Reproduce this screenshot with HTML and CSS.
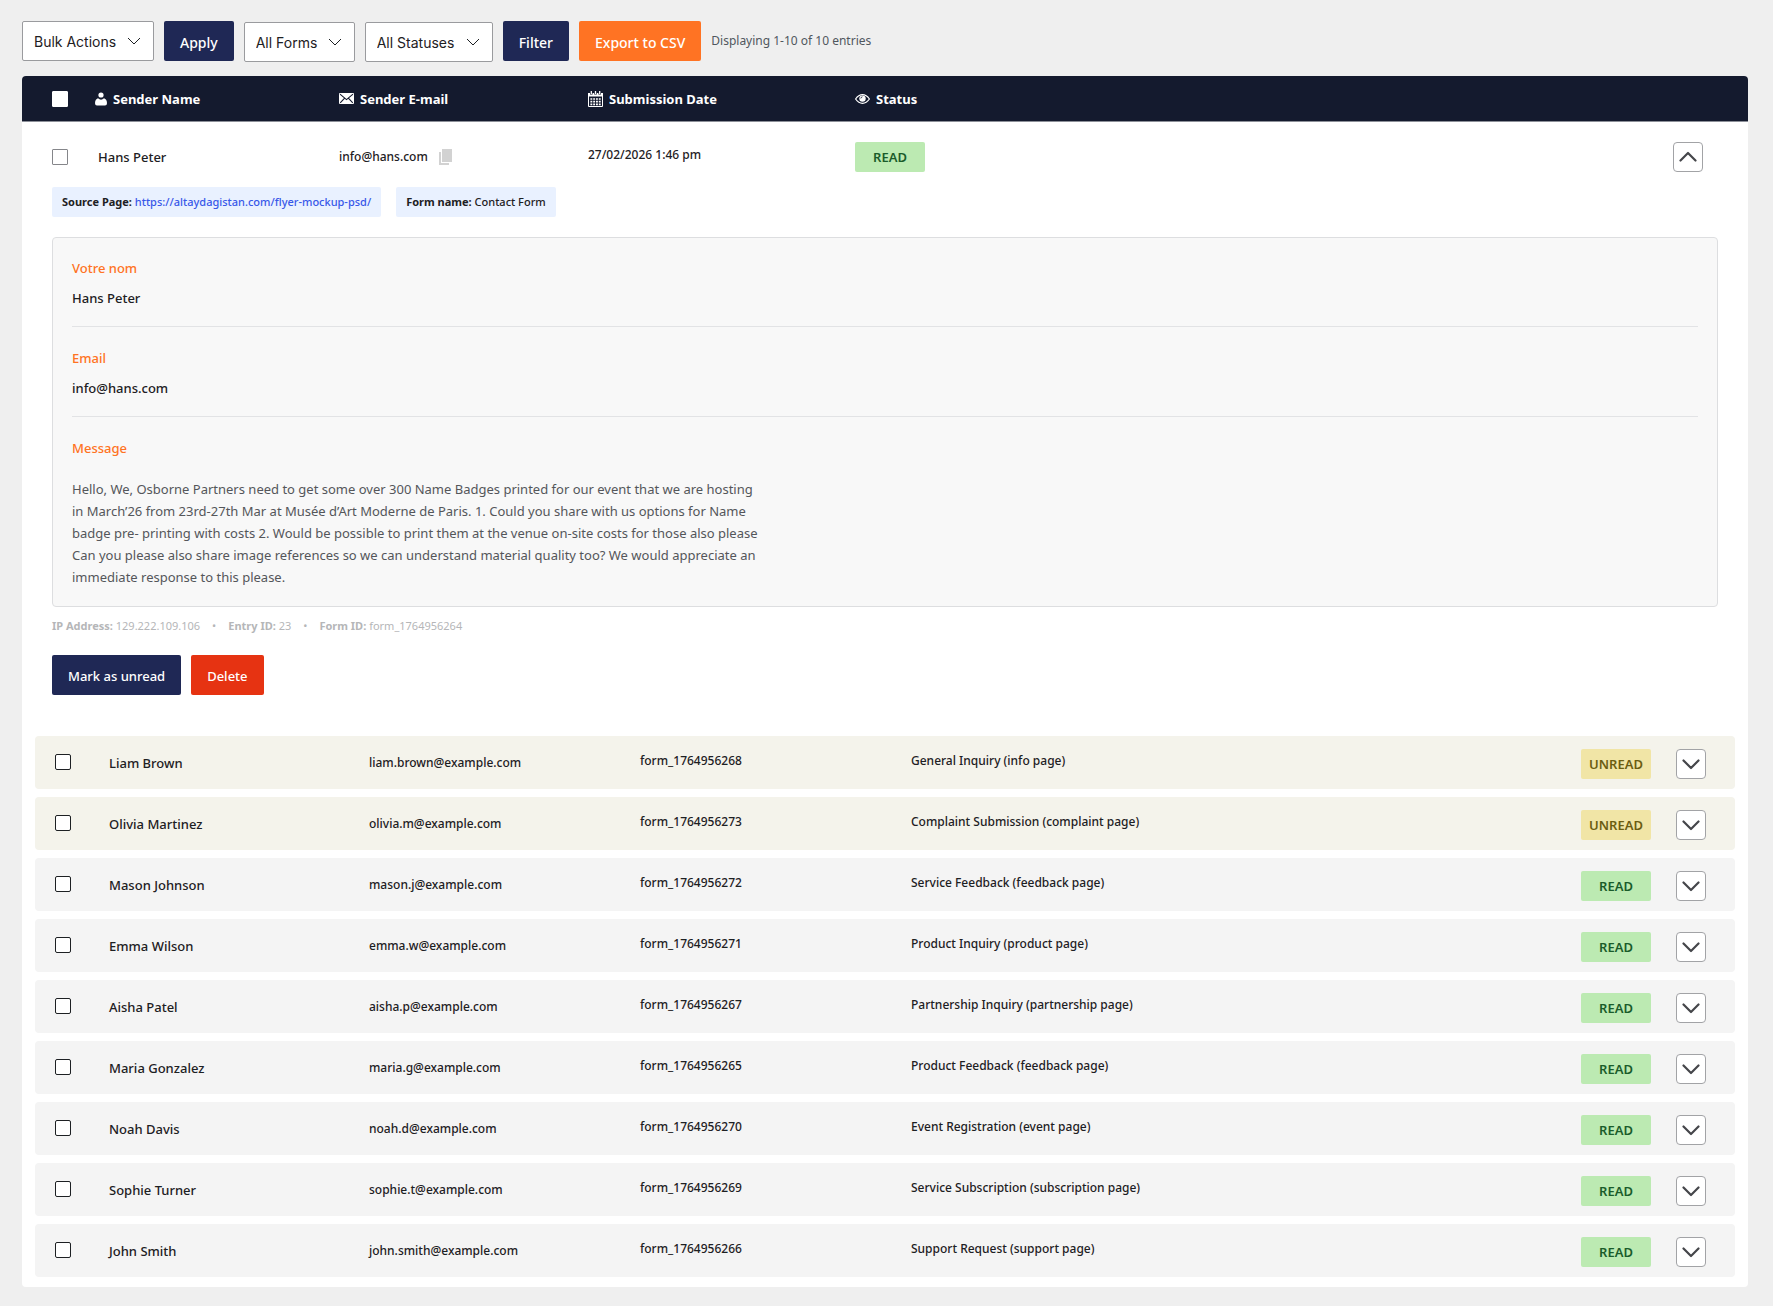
FILE: index.html
```html
<!DOCTYPE html>
<html lang="en">

<head>
    <meta charset="UTF-8">
    <meta name="viewport" content="width=device-width, initial-scale=1.0">
    <title>Form Entries</title>
    <link rel="stylesheet" href="styles.css">
</head>

<body>

    <!-- Shared icons -->
    <svg class="sprite" aria-hidden="true">
        <symbol id="caret" viewBox="0 0 14 8">
            <path d="M1 1 L7 7 L13 1" fill="none" stroke="currentColor" stroke-width="1" />
        </symbol>
        <symbol id="chevron" viewBox="0 0 18 11">
            <path d="M1.5 1.5 L9 9 L16.5 1.5" fill="none" stroke="currentColor" stroke-width="2.2" stroke-linecap="round" stroke-linejoin="round" />
        </symbol>
    </svg>

    <!-- Toolbar -->
    <form class="toolbar">
        <div class="select-box bulk">
            <select aria-label="Bulk Actions">
                <option>Bulk Actions</option>
            </select>
            <svg><use href="#caret" /></svg>
        </div>
        <button type="button" class="btn">Apply</button>
        <div class="select-box forms">
            <select aria-label="Filter by form">
                <option>All Forms</option>
            </select>
            <svg><use href="#caret" /></svg>
        </div>
        <div class="select-box statuses">
            <select aria-label="Filter by status">
                <option>All Statuses</option>
            </select>
            <svg><use href="#caret" /></svg>
        </div>
        <button type="button" class="btn">Filter</button>
        <button type="button" class="btn btn-export">Export to CSV</button>
        <span class="count">Displaying 1-10 of 10 entries</span>
    </form>

    <div class="panel">

        <!-- Header and open entry -->
        <table class="open-table">
            <colgroup>
                <col class="c-check">
                <col class="c-name">
                <col class="c-email">
                <col class="c-date">
                <col>
                <col class="c-toggle">
            </colgroup>
            <thead>
                <tr>
                    <th class="check"><input type="checkbox" aria-label="Select all"></th>
                    <th>
                        <span class="head">
                            <svg width="12" height="14" viewBox="0 0 12 14">
                                <circle cx="6" cy="3" r="2.6" fill="#fff" />
                                <path d="M3 6.3 Q6 9 9 6.3 Q12 7.4 12 11.2 Q12 13.4 10 13.4 H2 Q0 13.4 0 11.2 Q0 7.4 3 6.3Z" fill="#fff" />
                            </svg>
                            Sender Name
                        </span>
                    </th>
                    <th>
                        <span class="head">
                            <svg width="15" height="11" viewBox="0 0 15 11">
                                <rect width="15" height="11" rx="1" fill="#fff" />
                                <path d="M1 1.2 L7.5 6.6 L14 1.2 M1.2 9.8 L5.4 5.4 M13.8 9.8 L9.6 5.4" fill="none" stroke="#141a2e" stroke-width="1.1" />
                            </svg>
                            Sender E-mail
                        </span>
                    </th>
                    <th>
                        <span class="head">
                            <svg width="15" height="16" viewBox="0 0 15 16">
                                <path d="M0.5 5 V15.5 H14.5 V5" fill="none" stroke="#fff" />
                                <path d="M0 2 H2 V3.6 H4.6 V2 H6.2 V3.6 H8.8 V2 H10.4 V3.6 H13 V2 H15 V5.6 H0Z" fill="#fff" />
                                <path d="M3.3 0 V3 M7.5 0 V3 M11.7 0 V3" stroke="#fff" stroke-width="1.3" />
                                <path d="M2.4 8 H12.8 M2.4 10.7 H12.8 M2.4 13.4 H12.8" stroke="#fff" stroke-width="1.7" stroke-dasharray="1.9 0.9" />
                            </svg>
                            Submission Date
                        </span>
                    </th>
                    <th>
                        <span class="head">
                            <svg width="15" height="10" viewBox="0 0 15 10">
                                <path d="M0.6 5 Q3.6 0.7 7.5 0.7 Q11.4 0.7 14.4 5 Q11.4 9.3 7.5 9.3 Q3.6 9.3 0.6 5Z" fill="none" stroke="#fff" stroke-width="1.2" />
                                <circle cx="7.5" cy="4.6" r="3.2" fill="#fff" />
                                <path d="M5.8 4.4 Q6 3 7.4 2.8" fill="none" stroke="#141a2e" stroke-width="0.9" />
                            </svg>
                            Status
                        </span>
                    </th>
                    <th></th>
                </tr>
            </thead>
            <tbody>
                <tr class="open-row">
                    <td class="check"><input type="checkbox" aria-label="Select Hans Peter"></td>
                    <td class="name">Hans Peter</td>
                    <td class="email">
                        <span class="copy-mail">info@hans.com
                            <svg width="13" height="16" viewBox="0 0 13 16">
                                <path d="M3 0 H13 V13 H3Z M0 3 H2 V14 H10 V16 H0Z" fill="#d2d2d2" />
                            </svg>
                        </span>
                    </td>
                    <td class="small">27/02/2026 1:46 pm</td>
                    <td><span class="badge read">READ</span></td>
                    <td><button type="button" class="toggle open" aria-label="Close entry"><svg><use href="#chevron" /></svg></button></td>
                </tr>
                <tr>
                    <td colspan="6" class="detail">
                        <div class="chips">
                            <span class="chip"><b>Source Page:</b> <a href="#">https://altaydagistan.com/flyer-mockup-psd/</a></span>
                            <span class="chip"><b>Form name:</b> Contact Form</span>
                        </div>
                        <dl class="fields">
                            <div class="field">
                                <dt>Votre nom</dt>
                                <dd>Hans Peter</dd>
                            </div>
                            <div class="field">
                                <dt>Email</dt>
                                <dd>info@hans.com</dd>
                            </div>
                            <div class="field">
                                <dt>Message</dt>
                                <dd class="message">Hello, We, Osborne Partners need to get some over 300 Name Badges printed for our event that we are hosting<br>
                                    in March’26 from 23rd-27th Mar at Musée d’Art Moderne de Paris. 1. Could you share with us options for Name<br>
                                    badge pre- printing with costs 2. Would be possible to print them at the venue on-site costs for those also please<br>
                                    Can you please also share image references so we can understand material quality too? We would appreciate an<br>
                                    immediate response to this please.</dd>
                            </div>
                        </dl>
                        <p class="meta">
                            <span><b>IP Address:</b> 129.222.109.106</span>
                            <span>•</span>
                            <span><b>Entry ID:</b> 23</span>
                            <span>•</span>
                            <span><b>Form ID:</b> form_1764956264</span>
                        </p>
                        <div class="actions">
                            <button type="button" class="btn">Mark as unread</button>
                            <button type="button" class="btn btn-delete">Delete</button>
                        </div>
                    </td>
                </tr>
            </tbody>
        </table>

        <!-- Closed entries -->
        <div class="entries">
            <table class="list-table">
                <colgroup>
                    <col class="l-check">
                    <col class="l-name">
                    <col class="l-email">
                    <col class="l-form">
                    <col>
                    <col class="l-status">
                    <col class="l-toggle">
                </colgroup>
                <tbody>
                    <tr class="is-unread">
                        <td class="check"><input type="checkbox" aria-label="Select Liam Brown"></td>
                        <td class="name">Liam Brown</td>
                        <td class="email">liam.brown@example.com</td>
                        <td class="small">form_1764956268</td>
                        <td class="small">General Inquiry (info page)</td>
                        <td class="state"><span class="badge unread">UNREAD</span></td>
                        <td class="state"><button type="button" class="toggle" aria-label="Open entry"><svg><use href="#chevron" /></svg></button></td>
                    </tr>
                    <tr class="is-unread">
                        <td class="check"><input type="checkbox" aria-label="Select Olivia Martinez"></td>
                        <td class="name">Olivia Martinez</td>
                        <td class="email">olivia.m@example.com</td>
                        <td class="small">form_1764956273</td>
                        <td class="small">Complaint Submission (complaint page)</td>
                        <td class="state"><span class="badge unread">UNREAD</span></td>
                        <td class="state"><button type="button" class="toggle" aria-label="Open entry"><svg><use href="#chevron" /></svg></button></td>
                    </tr>
                    <tr>
                        <td class="check"><input type="checkbox" aria-label="Select Mason Johnson"></td>
                        <td class="name">Mason Johnson</td>
                        <td class="email">mason.j@example.com</td>
                        <td class="small">form_1764956272</td>
                        <td class="small">Service Feedback (feedback page)</td>
                        <td class="state"><span class="badge read">READ</span></td>
                        <td class="state"><button type="button" class="toggle" aria-label="Open entry"><svg><use href="#chevron" /></svg></button></td>
                    </tr>
                    <tr>
                        <td class="check"><input type="checkbox" aria-label="Select Emma Wilson"></td>
                        <td class="name">Emma Wilson</td>
                        <td class="email">emma.w@example.com</td>
                        <td class="small">form_1764956271</td>
                        <td class="small">Product Inquiry (product page)</td>
                        <td class="state"><span class="badge read">READ</span></td>
                        <td class="state"><button type="button" class="toggle" aria-label="Open entry"><svg><use href="#chevron" /></svg></button></td>
                    </tr>
                    <tr>
                        <td class="check"><input type="checkbox" aria-label="Select Aisha Patel"></td>
                        <td class="name">Aisha Patel</td>
                        <td class="email">aisha.p@example.com</td>
                        <td class="small">form_1764956267</td>
                        <td class="small">Partnership Inquiry (partnership page)</td>
                        <td class="state"><span class="badge read">READ</span></td>
                        <td class="state"><button type="button" class="toggle" aria-label="Open entry"><svg><use href="#chevron" /></svg></button></td>
                    </tr>
                    <tr>
                        <td class="check"><input type="checkbox" aria-label="Select Maria Gonzalez"></td>
                        <td class="name">Maria Gonzalez</td>
                        <td class="email">maria.g@example.com</td>
                        <td class="small">form_1764956265</td>
                        <td class="small">Product Feedback (feedback page)</td>
                        <td class="state"><span class="badge read">READ</span></td>
                        <td class="state"><button type="button" class="toggle" aria-label="Open entry"><svg><use href="#chevron" /></svg></button></td>
                    </tr>
                    <tr>
                        <td class="check"><input type="checkbox" aria-label="Select Noah Davis"></td>
                        <td class="name">Noah Davis</td>
                        <td class="email">noah.d@example.com</td>
                        <td class="small">form_1764956270</td>
                        <td class="small">Event Registration (event page)</td>
                        <td class="state"><span class="badge read">READ</span></td>
                        <td class="state"><button type="button" class="toggle" aria-label="Open entry"><svg><use href="#chevron" /></svg></button></td>
                    </tr>
                    <tr>
                        <td class="check"><input type="checkbox" aria-label="Select Sophie Turner"></td>
                        <td class="name">Sophie Turner</td>
                        <td class="email">sophie.t@example.com</td>
                        <td class="small">form_1764956269</td>
                        <td class="small">Service Subscription (subscription page)</td>
                        <td class="state"><span class="badge read">READ</span></td>
                        <td class="state"><button type="button" class="toggle" aria-label="Open entry"><svg><use href="#chevron" /></svg></button></td>
                    </tr>
                    <tr>
                        <td class="check"><input type="checkbox" aria-label="Select John Smith"></td>
                        <td class="name">John Smith</td>
                        <td class="email">john.smith@example.com</td>
                        <td class="small">form_1764956266</td>
                        <td class="small">Support Request (support page)</td>
                        <td class="state"><span class="badge read">READ</span></td>
                        <td class="state"><button type="button" class="toggle" aria-label="Open entry"><svg><use href="#chevron" /></svg></button></td>
                    </tr>
                </tbody>
            </table>
        </div>
    </div>

</body>

</html>
```

FILE: styles.css
```css
* {
    box-sizing: border-box;
}

body {
    margin: 0;
    padding: 21px 25px 19px 22px;
    background-color: #efefef;
    color: #1d2023;
    font-family: "Segoe UI", "Noto Sans", "Open Sans", sans-serif;
    font-size: 13px;
    line-height: 20px;
}

.sprite {
    display: none;
}

/* Toolbar */
.toolbar {
    display: flex;
    align-items: flex-start;
    gap: 10px;
    margin-bottom: 14px;
}

.select-box {
    position: relative;
    margin-top: 1px;
}

.select-box.bulk {
    width: 132px;
    margin-top: 0;
}

.select-box.forms {
    width: 111px;
}

.select-box.statuses {
    width: 128px;
}

.select-box select {
    appearance: none;
    width: 100%;
    height: 40px;
    padding: 0 11px;
    border: 1px solid #9a9b9e;
    border-radius: 2px;
    background-color: #fff;
    color: #1d2023;
    font-family: Inter, sans-serif;
    font-size: 14px;
}

.select-box svg {
    position: absolute;
    right: 13px;
    top: 16px;
    width: 14px;
    height: 8px;
    pointer-events: none;
}

.btn {
    height: 40px;
    padding: 2px 16px 0;
    border: none;
    border-radius: 2px;
    background-color: #1f2855;
    color: #fff;
    font-family: inherit;
    font-size: 13px;
    font-weight: 500;
    cursor: pointer;
}

.toolbar .btn {
    font-size: 14px;
}

.btn-export {
    background-color: #ff7323;
}

.btn-delete {
    background-color: #e63312;
}

.count {
    color: #50575e;
    font-size: 12px;
    line-height: 40px;
}

/* Panel */
.panel {
    background-color: #fff;
    border-radius: 4px;
    overflow: hidden;
}

table {
    width: 100%;
    table-layout: fixed;
    border-spacing: 0;
}

th,
td {
    padding: 0;
    text-align: left;
    white-space: nowrap;
}

input[type="checkbox"] {
    appearance: none;
    display: block;
    width: 16px;
    height: 16px;
    margin: 0;
    border: 1px solid #85868a;
    border-radius: 1px;
    background-color: #fff;
}

.open-table .check {
    padding-left: 30px;
}

.c-check { width: 73px; }
.c-name { width: 244px; }
.c-email { width: 249px; }
.c-date { width: 267px; }
.c-toggle { width: 75px; }

th {
    height: 46px;
    background-color: #141a2e;
    border-bottom: 1px solid #8d9099;
    color: #fff;
    font-weight: 700;
}

th input[type="checkbox"] {
    border-color: #fff;
}

.head {
    display: flex;
    align-items: center;
    gap: 6px;
}

.open-row td {
    height: 70px;
}

.open-row .name {
    padding-left: 3px;
}

.name,
.email,
.small {
    font-weight: 500;
}

.email,
.small {
    font-size: 12px;
}

.small {
    padding-bottom: 4px;
}

.copy-mail {
    display: flex;
    align-items: center;
    gap: 11px;
}

.badge {
    display: block;
    width: 70px;
    border-radius: 2px;
    font-size: 13px;
    font-weight: 600;
    line-height: 30px;
    text-align: center;
}

.badge.read {
    background-color: #bceab2;
    color: #1a5c2b;
}

.badge.unread {
    background-color: #f1e5a6;
    color: #6b5d12;
}

.toggle {
    display: flex;
    align-items: center;
    justify-content: center;
    width: 30px;
    height: 30px;
    padding: 2px 0 0;
    border: 1px solid #a2a3a6;
    border-radius: 4px;
    background-color: #fff;
    color: #45464a;
    cursor: pointer;
}

.toggle svg {
    width: 18px;
    height: 11px;
}

.toggle.open {
    padding: 0 0 2px;
}

.toggle.open svg {
    transform: rotate(180deg);
}

/* Opened entry */
.detail {
    padding: 0 30px 33px;
}

.chips {
    display: flex;
    gap: 15px;
    margin-top: -5px;
    margin-bottom: 20px;
}

.chip {
    padding: 0 10px;
    border-radius: 2px;
    background-color: #e9f1ff;
    font-size: 11px;
    font-weight: 500;
    line-height: 30px;
}

.chip a {
    color: #3858e9;
    text-decoration: none;
}

.fields {
    margin: 0;
    padding: 0 19px 18px;
    border: 1px solid #dddee0;
    border-radius: 4px;
    background-color: #f8f8f8;
}

.field {
    padding: 21px 0 18px;
    border-bottom: 1px solid #e2e3e5;
}

.field:first-child {
    padding-top: 20px;
}

.field:last-child {
    padding-bottom: 0;
    border-bottom: none;
}

.field dt {
    margin-bottom: 10px;
    color: #ff7323;
    font-weight: 500;
}

.field dd {
    margin: 0;
    font-weight: 500;
}

.field .message {
    padding-top: 10px;
    color: #54565a;
    font-weight: 400;
    line-height: 22px;
}

.meta {
    display: flex;
    gap: 12px;
    margin: 9px 0 19px;
    color: #b5b6b8;
    font-size: 11px;
}

.actions {
    display: flex;
    gap: 10px;
}

/* Closed entries */
.entries {
    padding: 0 13px 2px;
}

.list-table {
    border-spacing: 0 8px;
}

.l-check { width: 74px; }
.l-name { width: 260px; }
.l-email { width: 271px; }
.l-form { width: 271px; }
.l-status { width: 95px; }
.l-toggle { width: 59px; }

.list-table td {
    height: 53px;
    background-color: #f4f4f4;
}

.list-table .is-unread td {
    background-color: #f4f3eb;
}

.list-table td:first-child {
    padding-left: 20px;
    border-radius: 4px 0 0 4px;
}

.list-table td:last-child {
    border-radius: 0 4px 4px 0;
}

.list-table .check {
    padding-bottom: 2px;
}

.list-table .state {
    padding-top: 2px;
}

.list-table input[type="checkbox"] {
    border-color: #1d2023;
    border-radius: 2px;
}
```
